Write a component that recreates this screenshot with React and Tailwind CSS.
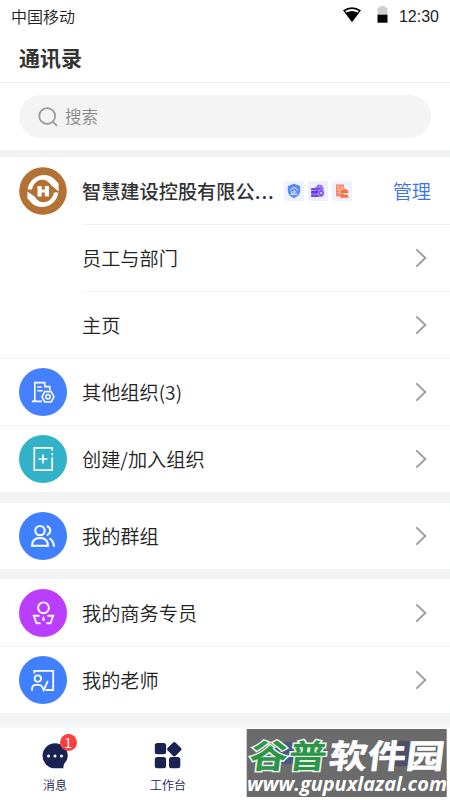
// Contacts page: company card, organisation list, groups and the bottom tab bar.

// --- Status bar icons ---
function WifiIcon() {
  return (
    <svg width="20" height="16" viewBox="0 0 20 16" aria-hidden="true">
      <path d="M1 3.3 Q10 -2.7 19 3.3 L10 15.3 Z" fill="#000" />
      <path d="M3.2 4 Q10 0.2 16.8 4 L15.6 5.6 Q10 2.6 4.4 5.6 Z" fill="#fff" />
    </svg>
  );
}

function BatteryIcon() {
  return (
    <svg width="11" height="17" viewBox="0 0 11 17" aria-hidden="true">
      <path d="M3 0 H8 V1.6 H10.5 V9 H0.5 V1.6 H3 Z" fill="#cfcfcf" />
      <path d="M0.5 8.7 H10.5 V16.7 H0.5 Z" fill="#000" />
    </svg>
  );
}

function SearchIcon() {
  return (
    <svg width="20" height="20" viewBox="0 0 20 20" fill="none" stroke="#999" strokeWidth="1.8" aria-hidden="true">
      <circle cx="9.2" cy="9" r="7.9" />
      <path d="M14.7 14.7 L19 18.8" />
    </svg>
  );
}

function Chevron() {
  return (
    <svg width="12" height="20" viewBox="0 0 12 20" fill="none" stroke="#999" strokeWidth="1.8" aria-hidden="true">
      <path d="M1.3 1.3 L10.4 10 L1.3 18.7" />
    </svg>
  );
}

// --- Company logo and badges ---
function CompanyLogo() {
  return (
    <svg width="48" height="48" viewBox="0 0 48 48" aria-hidden="true">
      <circle cx="24" cy="24" r="23.8" fill="#b37233" />
      <path d="M8.6 22.4 C10 13.5 17 8 25 8 C30.5 8 34.8 10.5 37.3 14.3 L39.6 16.6 L39.6 24.4 L32.2 18.2 C29.5 14.2 26.5 12.3 22.5 12.7 C17.5 13.2 14 17.5 13 22.4 Z" fill="#fff" />
      <path d="M39.4 25.6 C38 34.5 31 40 23 40 C17.5 40 13.2 37.5 10.7 33.7 L8.4 31.4 L8.4 24.6 L15.8 29.8 C18.5 33.8 21.5 35.7 25.5 35.3 C30.5 34.8 34 30.5 35 25.6 Z" fill="#fff" />
      <path d="M18.5 19 H22.7 V22.6 H25.8 V19 H30 V29.5 H25.8 V25.6 H22.7 V29.5 H18.5 Z" fill="#fff" />
    </svg>
  );
}

function ShieldBadge() {
  return (
    <svg width="20" height="20" viewBox="0 0 20 20" aria-hidden="true">
      <rect width="20" height="20" rx="2" fill="#eef2fc" />
      <path d="M10 2.8 L16.2 5 V10 Q16 14.8 10 17.2 Q4 14.8 3.8 10 V5 Z" fill="#5a8af3" />
      <path d="M6 9.3 L10 6.3 L14 9.3 M10 9 V13.2 M7.8 10.2 V13.2 M10 11 H12.3 M6.6 13.3 H13.4" fill="none" stroke="#fff" strokeWidth="0.9" />
    </svg>
  );
}

function CoinsBadge() {
  return (
    <svg width="20" height="20" viewBox="0 0 20 20" aria-hidden="true">
      <rect width="20" height="20" rx="2" fill="#eef0fb" />
      <path d="M7 7 L10 3.5 L14 4 L16 7.5 L15 12 H9 Z" fill="#9a7deb" />
      <rect x="3" y="7" width="11" height="2.6" rx="0.8" fill="#7448ea" />
      <rect x="3" y="10.1" width="11" height="2.6" rx="0.8" fill="#6335e4" />
      <rect x="3" y="13.2" width="11.5" height="2.8" rx="0.8" fill="#7448ea" />
      <ellipse cx="13.2" cy="12" rx="3" ry="3.8" fill="#8055ee" stroke="#d5c8fb" strokeWidth="0.6" />
      <circle cx="13.2" cy="12" r="1" fill="#e9e2ff" />
    </svg>
  );
}

function BuilderBadge() {
  return (
    <svg width="20" height="20" viewBox="0 0 20 20" aria-hidden="true">
      <rect width="20" height="20" rx="2" fill="#f0f1fa" />
      <path d="M4 3.5 H12 V15.5 H4 Z" fill="#fb8a6c" />
      <path d="M5.5 6 H8 M5.5 8.8 H8 M5.5 11.6 H7.5 M10 5 V9" stroke="#ffe3da" strokeWidth="0.9" />
      <path d="M7.6 11.5 Q9 7.5 12.3 7.5 Q15.8 7.5 17 11.5 L15.6 12.5 H9 Z" fill="#f86f4c" stroke="#f0f1fa" strokeWidth="0.5" />
      <path d="M8.3 16.7 Q8.5 13.8 10.7 13 L12.3 14.3 L14 13 Q16.3 13.8 16.5 16.7 Z" fill="#f86f4c" />
    </svg>
  );
}

// --- Round menu icons (48px, white strokes) ---
function OrgIcon() {
  return (
    <svg width="48" height="48" viewBox="0 0 48 48" fill="none" stroke="#fff" strokeWidth="1.6" aria-hidden="true">
      <circle cx="24" cy="24" r="24" fill="#4480ff" stroke="none" />
      <path d="M15.8 33.3 V14.6 H25.8 V18.6 H30.8 V22.3 M13 33.4 H23 M18.3 19 H22.8 M18.3 22.8 H23.8" />
      <path d="M25.8 23.6 H32.2 L35 28.8 L32.2 34 H25.8 L23 28.8 Z" />
      <circle cx="29" cy="28.8" r="2.2" />
    </svg>
  );
}

function CreateIcon() {
  return (
    <svg width="48" height="48" viewBox="0 0 48 48" fill="none" stroke="#fff" strokeWidth="1.7" aria-hidden="true">
      <circle cx="24" cy="24" r="24" fill="#31b2c9" stroke="none" />
      <path d="M33.2 15.8 V12.9 H15.3 V35.1 H33.2 V22.3 M33.2 18.2 V20.3 M24 19.6 V28.4 M19.6 24 H28.4" />
    </svg>
  );
}

function GroupIcon() {
  return (
    <svg width="48" height="48" viewBox="0 0 48 48" fill="none" stroke="#fff" strokeWidth="2" aria-hidden="true">
      <circle cx="24" cy="24" r="24" fill="#4080ff" stroke="none" />
      <circle cx="21" cy="18.6" r="4.7" />
      <path d="M13 33.7 Q13.2 26 21 26 Q28.8 26 29 33.7 Z M27.8 14 Q31.3 15.4 31.3 18.6 Q31.3 21.8 27.8 23.2 M30.3 26.3 Q34.8 28.7 35 34.7" />
    </svg>
  );
}

function AgentIcon() {
  return (
    <svg width="48" height="48" viewBox="0 0 48 48" fill="none" stroke="#fff" strokeWidth="1.9" aria-hidden="true">
      <circle cx="24" cy="24" r="24" fill="#bb3dff" stroke="none" />
      <circle cx="24.5" cy="18.8" r="5.4" />
      <path d="M20.5 26.8 H14.8 L17.5 34.3 H21.5 M28.5 26.8 H34.2 L31.5 34.3 H27.5" />
      <path d="M24.5 26.6 L26.2 31.6 H22.8 Z" fill="#fff" stroke="none" />
    </svg>
  );
}

function TeacherIcon() {
  return (
    <svg width="48" height="48" viewBox="0 0 48 48" fill="none" stroke="#fff" strokeWidth="1.8" aria-hidden="true">
      <circle cx="24" cy="24" r="24" fill="#4080ff" stroke="none" />
      <path d="M15.3 17.6 V14.8 H34.2 V34 H26.5" />
      <circle cx="18.8" cy="22.6" r="3.2" />
      <path d="M13 34.8 V32.5 Q13.2 28.8 17 28.8 H20 Q22.3 28.8 23.3 31 L24.8 34 L28.8 24.8" />
    </svg>
  );
}

// --- Bottom tab icons ---
function MessageIcon() {
  return (
    <svg width="27" height="26" viewBox="0 0 27 26" aria-hidden="true">
      <path d="M13 0.3 A12.7 12.7 0 0 1 25.8 13 Q25.8 16.5 22.5 20.2 Q21.3 21.7 21.3 25.3 H13 A12.5 12.5 0 0 1 13 0.3 Z" fill="#192352" />
      <circle cx="6.5" cy="13" r="1.5" fill="#fff" />
      <circle cx="13" cy="13" r="1.5" fill="#fff" />
      <circle cx="19.5" cy="13" r="1.5" fill="#fff" />
    </svg>
  );
}

function WorkbenchIcon() {
  return (
    <svg width="28" height="28" viewBox="0 0 28 28" fill="#192352" aria-hidden="true">
      <rect x="0.8" y="2" width="11.3" height="11.3" rx="2.5" />
      <rect x="0.8" y="16" width="11.3" height="11.3" rx="2.5" />
      <rect x="15" y="16" width="11.3" height="11.3" rx="2.5" />
      <rect x="14.7" y="2.6" width="11.2" height="11.2" rx="2" transform="rotate(45 20.3 8.2)" />
    </svg>
  );
}

function SiteMark() {
  return (
    <svg width="202" height="70" viewBox="0 0 202 70" className="absolute left-[246px] top-0">
      <rect x="0.7" y="1" width="200" height="68" fill="#6b6b6b" />
      <path d="M25 14 H50 V36 H25 Z" fill="#4b5582" />
      <path d="M136 19 Q146 10 166 14 L168 26 Q166 40 157 38 Q143 41 138 28 Z" fill="#4c5066" />
      <g transform="translate(2 40) skewX(-7) scale(1 0.86)" fontFamily="Noto Sans CJK SC, sans-serif" fontSize="38">
        <text x="0.5" y="0" textLength="77" fontWeight="700" fill="#2d9548" stroke="#e6f2e8" strokeWidth="3.4" paintOrder="stroke">谷普</text>
        <text x="0.5" y="0" textLength="77" fontWeight="700" fill="#2d9548" stroke="#2d9548" strokeWidth="1" aria-hidden="true" />
        <text x="80" y="0" textLength="115" fontWeight="700" fill="#fff" stroke="#fff" strokeWidth="0.7">软件园</text>
      </g>
      <text x="1" y="62.5" textLength="200" lengthAdjust="spacingAndGlyphs" fill="#fff" fontFamily="Open Sans, sans-serif" fontWeight="700" fontStyle="italic" fontSize="20">www.gupuxlazal.com</text>
    </svg>
  );
}

const dividers = {
  none: '',
  full: 'border-t border-[#f3f3f3]',
};

function Row({ icon, label, divider = 'none' }) {
  return (
    <li className={`flex h-[67px] items-center pl-[19px] ${dividers[divider] ?? ''}`}>
      <div className="flex w-[63px] shrink-0">{icon}</div>
      <div className={`flex h-full flex-1 items-center justify-between pr-[23px] ${divider === 'inset' ? 'border-t border-[#f3f3f3]' : ''}`}>
        <span className="text-[19.2px] leading-7 font-[350] text-[#222]">{label}</span>
        <Chevron />
      </div>
    </li>
  );
}

const orgRows = [
  { label: '员工与部门', divider: 'inset' },
  { label: '主页', divider: 'inset' },
  { label: '其他组织(3)', icon: <OrgIcon />, divider: 'full' },
  { label: '创建/加入组织', icon: <CreateIcon />, divider: 'full' },
];

const helperRows = [
  { label: '我的商务专员', icon: <AgentIcon /> },
  { label: '我的老师', icon: <TeacherIcon />, divider: 'full' },
];

function App() {
  return (
    <div className="flex h-[800px] w-[450px] flex-col overflow-hidden bg-[#f2f3f5] font-['Noto_Sans_CJK_SC',sans-serif] text-[#333]">

      {/* ── Status bar + title ── */}
      <header className="h-[83px] shrink-0 border-b border-[#efefef] bg-white">
        <div className="flex h-8 items-center justify-between pr-[11px] pl-[11px]">
          <span className="text-[16px] font-[350] text-[#222]">中国移动</span>
          <div className="flex items-center">
            <span className="flex pb-0.5"><WifiIcon /></span>
            <span className="ml-[15px] flex pb-[3px]"><BatteryIcon /></span>
            <span className="ml-[11px] pt-px font-['Liberation_Sans',sans-serif] text-[16px] text-[#222]">12:30</span>
          </div>
        </div>
        <h1 className="pl-[19px] text-[21px] leading-[50px] font-bold">通讯录</h1>
      </header>

      {/* ── Search ── */}
      <div className="h-[67px] shrink-0 bg-white px-[19px] pt-3">
        <div className="flex h-[43px] w-[412px] items-center gap-[7px] rounded-full bg-[#f4f4f4] pl-[19px] text-[16.5px] font-[350] text-[#888]">
          <SearchIcon />
          搜索
        </div>
      </div>

      {/* ── Company ── */}
      <section className="mt-[7px] bg-white">
        <div className="flex h-[67px] items-center pl-[19px]">
          <div className="w-[63px] shrink-0"><CompanyLogo /></div>
          <h2 className="flex w-[202px] text-[19.2px] leading-7 font-medium">
            智慧建设控股有限公<span className="tracking-[1px]">...</span>
          </h2>
          <div className="flex gap-1">
            <ShieldBadge />
            <CoinsBadge />
            <BuilderBadge />
          </div>
          <span className="mr-[19px] ml-auto pt-0.5 text-[19.2px] font-[350] text-[#3a72f0]">管理</span>
        </div>
        <ul>
          {orgRows.map((r) => <Row key={r.label} {...r} />)}
        </ul>
      </section>

      <ul className="mt-[11px] flex h-[66px] flex-col bg-white">
        <Row label="我的群组" icon={<GroupIcon />} />
      </ul>

      <ul className="mt-2.5 bg-white">
        {helperRows.map((r) => <Row key={r.label} {...r} />)}
      </ul>

      {/* ── Tab bar ── */}
      <nav className="relative mt-auto flex h-[72px] shrink-0 bg-white text-[12px] font-[350] text-[#192352] shadow-[0_-1px_3px_2px_#f8f8f8]">
        <div className="flex w-[110px] flex-col items-center pt-[15px]">
          <div className="relative">
            <MessageIcon />
            <span className="absolute -top-[9px] left-[18px] flex size-[17px] items-center justify-center rounded-full bg-[#fa4040] text-[14px] text-white">1</span>
          </div>
          <span className="mt-[6px] leading-5">消息</span>
        </div>
        <div className="flex w-[116px] flex-col items-center pt-[13px]">
          <WorkbenchIcon />
          <span className="mt-[6px] leading-5">工作台</span>
        </div>
        <SiteMark />
      </nav>
    </div>
  );
}

export default App;
